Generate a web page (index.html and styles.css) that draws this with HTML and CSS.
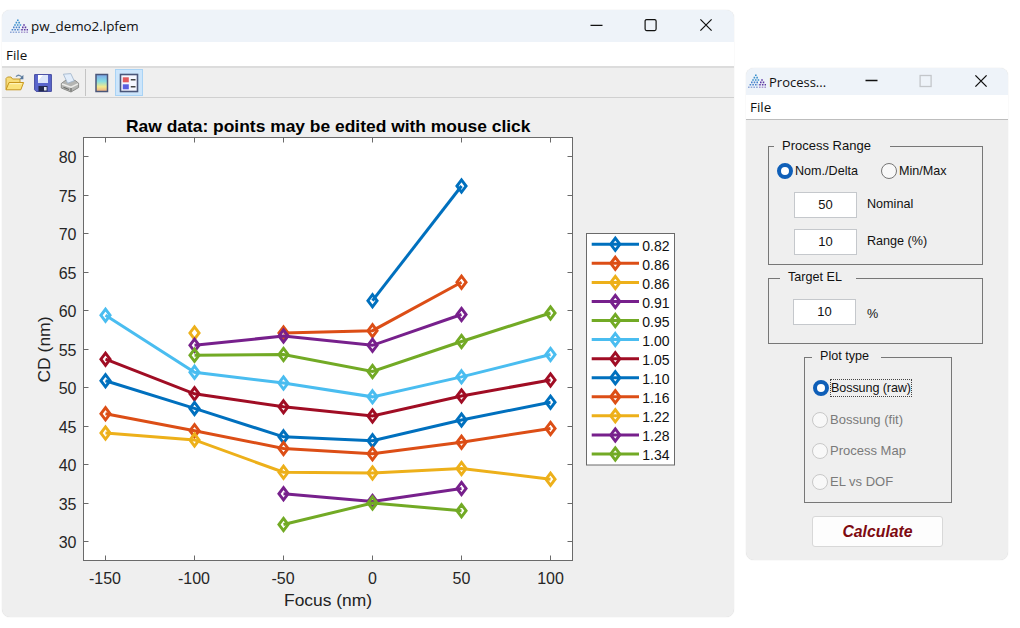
FILE: index.html
```html
<!DOCTYPE html>
<html lang="en">
<head>
    <meta charset="UTF-8">
    <meta name="viewport" content="width=device-width, initial-scale=1.0">
    <title>pw_demo2.lpfem</title>
    <link rel="stylesheet" href="styles.css">
</head>
<body>

<!-- App logo, used in both title bars -->
<svg class="defs" width="0" height="0">
    <symbol id="logo" viewBox="0 0 20 15">
        <g fill="none" stroke-width="1.6" stroke-dasharray="1.6 1.1">
            <path stroke="#3a90cc" d="M8 1.2h1.6M6.6 3.6h4.3M5.2 6h7"/>
            <path stroke="#4a84cc" d="M4 8.4h7.5M2.6 10.8h8.6"/>
            <path stroke="#8fa8d8" d="M1 13.2h10.6"/>
            <path stroke="#5f3aa4" d="M14.2 6h1.6M13 8.4h4.3M12.2 10.8h6.8"/>
            <path stroke="#a89ad0" d="M12 13.2h8"/>
        </g>
    </symbol>
</svg>

<div class="desktop">
    <!-- Plot window -->
    <div class="window plot-window">
        <div class="titlebar">
            <svg class="logo" width="20" height="15"><use href="#logo"/></svg>
            <span class="title">pw_demo2.lpfem</span>
            <svg class="controls" width="124" height="14" viewBox="0 0 124 14" fill="none" stroke="#111" stroke-width="1.2">
                <path d="M0.5 7.3h12"/>
                <rect x="55.1" y="1.6" width="11" height="11" rx="1.5"/>
                <path d="M110.4 1.4l11.2 11.2M121.6 1.4l-11.2 11.2"/>
            </svg>
        </div>
        <div class="menubar"><span>File</span></div>
        <div class="toolbar">
            <!-- open -->
            <svg class="tool" width="20" height="20" viewBox="0 0 20 20">
                <path d="M1 16.5V5.5L2.5 4H6l1.6 2H15v4" fill="#f7dc79" stroke="#c39a2e"/>
                <path d="M1 16.8L4 9.5h14.6l-2.8 7.3z" fill="#fbe27a" stroke="#c8961c"/>
                <path d="M4.8 10.7h12" stroke="#fff6c4"/>
                <path d="M11 3.6c2-2.2 4.4-1.6 6 .8" fill="none" stroke="#6e8aa8" stroke-width="1.3"/>
                <path d="M18.4 1.8v4.4h-4z" fill="#58779a"/>
            </svg>
            <!-- save -->
            <svg class="tool save" width="20" height="20" viewBox="0 0 20 20">
                <path d="M1.6 1.6h16.8v16.8H3.2l-1.6-1.6z" fill="#5a66cc" stroke="#454ba0"/>
                <path d="M5 2h10v8H5z" fill="#dde6fa"/>
                <path d="M5 2h5L5 8z" fill="#fff"/>
                <path d="M5.5 13h9v5.4h-9z" fill="#22294f"/>
                <path d="M11 14h2.6v3.6H11z" fill="#e4e9f4"/>
            </svg>
            <!-- print -->
            <svg class="tool print" width="20" height="20" viewBox="0 0 20 20">
                <path d="M1.3 10.5L6 7l9 .4 3.6 2.8v4.3L11 19l-9.7-4z" fill="#b4b5b3" stroke="#8b8c89"/>
                <path d="M3.4 1.2l7.4-.6 3.4 7.2-6.6 2.4z" fill="#e2edfa" stroke="#9db1c8" stroke-width=".8"/>
                <path d="M2 11l9 3.2 7-3.4" fill="none" stroke="#ecece9" stroke-width="1.5"/>
                <path d="M11 15v3.4M3.5 14.3l5.500 2.200" stroke="#6c6d6a" stroke-width="1.2"/>
            </svg>
            <span class="divider"></span>
            <!-- colorbar -->
            <svg class="tool colorbar" width="14" height="20" viewBox="0 0 14 20">
                <defs>
                    <linearGradient id="bar" x1="0" y1="0" x2="0" y2="1">
                        <stop offset="0" stop-color="#7da6ea"/>
                        <stop offset=".4" stop-color="#86dde2"/>
                        <stop offset=".72" stop-color="#f3ea8c"/>
                        <stop offset="1" stop-color="#eeaa83"/>
                    </linearGradient>
                </defs>
                <rect x="1" y="1.5" width="11.5" height="17" fill="url(#bar)" stroke="#4a5679" stroke-width="1.5"/>
            </svg>
            <!-- legend toggle -->
            <span class="tool-active">
                <svg width="20" height="20" viewBox="0 0 20 20">
                    <rect x="1.5" y="1.5" width="17" height="17" fill="#f5f7ff" stroke="#4a5679" stroke-width="1.6"/>
                    <rect x="3.8" y="4.3" width="6" height="5" fill="#e2595c"/>
                    <rect x="3.8" y="11.3" width="6" height="5" fill="#5a5fe0"/>
                    <path d="M11.8 6.8h4.7M11.8 13.8h4.7" stroke="#444" stroke-width="1.4"/>
                </svg>
            </span>
        </div>
        <svg id="figure" width="732" height="519" viewBox="2 98 732 519"></svg>
    </div>

    <!-- Process window dialog -->
    <div class="window process-window">
        <div class="titlebar">
            <svg class="logo" width="20" height="15"><use href="#logo"/></svg>
            <span class="title">Process...</span>
            <svg class="controls" width="124" height="14" viewBox="0 0 124 14" fill="none" stroke="#111" stroke-width="1.3">
                <path d="M0.5 6.5h12"/>
                <rect x="55.1" y="1.5" width="11" height="11" stroke="#c3c6ca"/>
                <path d="M110.4 1.4l11.2 11.2M121.6 1.4l-11.2 11.2"/>
            </svg>
        </div>
        <div class="menubar"><span>File</span></div>
        <div class="panel">
            <fieldset class="group range">
                <legend>Process Range</legend>
                <div class="modes">
                    <span class="radio checked">Nom./Delta</span>
                    <span class="radio">Min/Max</span>
                </div>
                <div class="field"><span class="box">50</span><span class="name">Nominal</span></div>
                <div class="field"><span class="box">10</span><span class="name">Range (%)</span></div>
            </fieldset>
            <fieldset class="group target">
                <legend>Target EL</legend>
                <div class="field"><span class="box">10</span><span class="percent">%</span></div>
            </fieldset>
            <fieldset class="group plot-type">
                <legend>Plot type</legend>
                <span class="radio checked"><span class="focused">Bossung (raw)</span></span>
                <span class="radio disabled">Bossung (fit)</span>
                <span class="radio disabled">Process Map</span>
                <span class="radio disabled">EL vs DOF</span>
            </fieldset>
            <button class="calculate">Calculate</button>
        </div>
    </div>
</div>

<script src="script.js"></script>
</body>
</html>
```

FILE: styles.css
```css
*,
*::before {
    box-sizing: border-box;
}

body {
    margin: 0;
    background-color: #fff;
    font-family: "Liberation Sans", Arial, sans-serif;
    color: #111;
}

.defs {
    position: absolute;
}

.desktop {
    display: flex;
    align-items: flex-start;
    gap: 12px;
    width: 1020px;
    height: 628px;
    padding: 10px 0 0 2px;
    overflow: hidden;
}

.window {
    background-color: #efefef;
    border-radius: 8px;
    overflow: hidden;
    box-shadow: 0 0 1px #ccc;
}

.plot-window {
    width: 732px;
    height: 607px;
}

.process-window {
    width: 262px;
    height: 492px;
    margin-top: 58px;
}

/* Title bar and menu */
.titlebar {
    display: flex;
    align-items: center;
    height: 32px;
    padding-left: 7px;
    background-color: #eef3f9;
    font-family: "Open Sans", "Noto Sans", sans-serif;
    font-size: 13.4px;
}

.process-window .titlebar {
    height: 27px;
    padding-left: 1px;
    font-size: 13px;
}

.title {
    margin-left: 2px;
    white-space: nowrap;
}

.controls {
    margin-left: auto;
    margin-right: 20px;
    margin-bottom: 2px;
}

.process-window .controls {
    margin-right: 19px;
}

.menubar {
    height: 24px;
    padding-left: 4px;
    background-color: #fff;
    font-family: "Open Sans", "Noto Sans", sans-serif;
    font-size: 13.4px;
    line-height: 26px;
}

.process-window .menubar {
    height: 25px;
    border-bottom: 1px solid #bdbdbd;
    line-height: 25px;
}

/* Toolbar */
.toolbar {
    display: flex;
    align-items: center;
    height: 32px;
    padding-left: 3px;
    border-top: 2px solid #dcdcdc;
    border-bottom: 1px solid #d0d0d0;
}

.save {
    margin-left: 8px;
}

.print {
    margin-left: 7px;
}

.divider {
    width: 1px;
    height: 27px;
    margin-left: 5px;
    background-color: #c4c4c4;
}

.colorbar {
    margin-left: 9px;
}

.tool-active {
    display: flex;
    align-items: center;
    justify-content: center;
    width: 28px;
    height: 27px;
    margin-left: 6px;
    background-color: #cce5fb;
    border: 1px solid #a9d3f5;
}

/* Figure */
#figure {
    display: block;
}

.axes {
    fill: #fff;
    stroke: #6a6a6a;
}

.tick {
    stroke: #6a6a6a;
}

.tick-label {
    font-size: 16px;
    fill: #262626;
}

.axis-label {
    font-size: 17px;
    fill: #222;
}

.plot-title {
    font-size: 17px;
    font-weight: bold;
    fill: #000;
}

.legend-label {
    font-size: 14px;
    fill: #111;
}

.series {
    fill: none;
    stroke-width: 3;
}

.marker {
    fill: none;
    stroke-width: 2.9;
}

/* Process dialog */
.panel {
    display: flex;
    flex-direction: column;
    align-items: flex-start;
    padding: 18px 0 0 22px;
    font-size: 12.6px;
}

.group {
    width: 215px;
    min-width: 0;
    margin: 0;
    padding: 0;
    border: 1px solid #777;
}

.group legend {
    height: 16px;
    line-height: 15px;
    padding: 0 0 0 8px;
}

.range {
    height: 127px;
}

.range legend {
    width: 116px;
    margin-left: 5px;
    font-size: 13px;
}

.target {
    height: 74px;
    margin-top: 5px;
}

.target legend {
    width: 76px;
    margin-left: 11px;
}

.plot-type {
    width: 148px;
    height: 154px;
    margin: 5px 0 0 36px;
}

.plot-type legend {
    width: 69px;
    margin-left: 7px;
}

.radio {
    display: flex;
    align-items: center;
    height: 17px;
}

.radio::before {
    content: "";
    width: 16px;
    height: 16px;
    margin-right: 2px;
    border: 1px solid #767676;
    border-radius: 50%;
    background-color: #f8f8f8;
}

.radio.checked::before {
    border: 4px solid #0f5fb8;
    background-color: #fff;
}

.radio.disabled {
    font-size: 13px;
    color: #7a7a7a;
}

.radio.disabled::before {
    border-color: #c8c8c8;
}

.modes {
    display: flex;
    padding: 8px 0 0 8px;
}

.modes .radio:first-child {
    width: 104px;
}

.field {
    display: flex;
    align-items: center;
    gap: 10px;
    height: 26px;
    margin: 13px 0 0 25px;
}

.field + .field {
    margin-top: 11px;
}

.name {
    margin-bottom: 3px;
}

.box {
    width: 63px;
    height: 26px;
    border: 1px solid #c5c8cc;
    background-color: #fff;
    font-size: 13px;
    line-height: 24px;
    text-align: center;
}

.target .field {
    margin: 13px 0 0 24px;
    gap: 11px;
}

.percent {
    margin-top: 4px;
}

.plot-type .radio {
    margin: 14px 0 0 7px;
}

.plot-type .radio.checked {
    margin: 14px 0 15px 8px;
}

.focused {
    outline: 1px dotted #444;
    line-height: 16px;
    letter-spacing: -0.1px;
}

.calculate {
    width: 131px;
    height: 31px;
    margin: 13px 0 0 44px;
    border: 1px solid #d8d8d8;
    border-radius: 3px;
    background-color: #fdfdfd;
    color: #7d0a10;
    font-family: inherit;
    font-size: 15.8px;
    font-weight: bold;
    font-style: italic;
}
```

FILE: script.js
```js
const BLUE = '#0070be';
const ORANGE = '#dc4e16';
const YELLOW = '#edb01a';
const PURPLE = '#77208c';
const GREEN = '#72aa25';
const CYAN = '#4abdf0';
const RED = '#a00d24';

// One series per dose, points are [focus, CD]
const series = [
    { dose: '0.82', color: BLUE, points: [[0, 61.3], [50, 76.2]] },
    { dose: '0.86', color: ORANGE, points: [[-50, 57.1], [0, 57.4], [50, 63.7]] },
    { dose: '0.86', color: YELLOW, points: [[-100, 57.1]] },
    { dose: '0.91', color: PURPLE, points: [[-100, 55.5], [-50, 56.7], [0, 55.5], [50, 59.5]] },
    { dose: '0.95', color: GREEN, points: [[-100, 54.2], [-50, 54.3], [0, 52.1], [50, 56], [100, 59.7]] },
    { dose: '1.00', color: CYAN, points: [[-150, 59.4], [-100, 52], [-50, 50.6], [0, 48.8], [50, 51.4], [100, 54.3]] },
    { dose: '1.05', color: RED, points: [[-150, 53.7], [-100, 49.2], [-50, 47.5], [0, 46.3], [50, 48.9], [100, 51]] },
    { dose: '1.10', color: BLUE, points: [[-150, 50.9], [-100, 47.3], [-50, 43.6], [0, 43.1], [50, 45.8], [100, 48.1]] },
    { dose: '1.16', color: ORANGE, points: [[-150, 46.6], [-100, 44.4], [-50, 42.1], [0, 41.4], [50, 42.9], [100, 44.7]] },
    { dose: '1.22', color: YELLOW, points: [[-150, 44.1], [-100, 43.2], [-50, 39], [0, 38.9], [50, 39.5], [100, 38.1]] },
    { dose: '1.28', color: PURPLE, points: [[-50, 36.2], [0, 35.2], [50, 36.9]] },
    { dose: '1.34', color: GREEN, points: [[-50, 32.2], [0, 35], [50, 34]] }
];

const box = { left: 83.5, right: 572.5, top: 137.5, bottom: 560.5 };

function xPos(focus) {
    return 105.5 + (focus + 150) * 1.78;
}

function yPos(cd) {
    return 156.8 + (80 - cd) * 7.694;
}

function marker(x, y, color) {
    return `<path class="marker" stroke="${color}" d="M${x} ${y - 6.1}l4.6 6.1l-4.6 6.1l-4.6 -6.1z"/>`;
}

let svg = `<rect class="axes" x="${box.left}" y="${box.top}" width="${box.right - box.left}" height="${box.bottom - box.top}"/>`;

// Ticks
for (let f = -150; f <= 100; f += 50) {
    const x = Math.floor(xPos(f)) + 0.5;
    svg += `<path class="tick" d="M${x} ${box.top}v5M${x} ${box.bottom}v-5"/>`;
    svg += `<text class="tick-label" x="${xPos(f) - (f < 0 ? 0.5 : 0)}" y="583.5" text-anchor="middle">${f}</text>`;
}
for (let cd = 30; cd <= 80; cd += 5) {
    const y = Math.floor(yPos(cd)) + 0.5;
    svg += `<path class="tick" d="M${box.left} ${y}h5M${box.right} ${y}h-5"/>`;
    svg += `<text class="tick-label" x="76.5" y="${y + 6.3}" text-anchor="end">${cd}</text>`;
}

// Labels
svg += '<text class="plot-title" x="126" y="131.5" textLength="404.5" lengthAdjust="spacingAndGlyphs">Raw data: points may be edited with mouse click</text>';
svg += '<text class="axis-label" x="284" y="606" textLength="88" lengthAdjust="spacingAndGlyphs">Focus (nm)</text>';
svg += '<text class="axis-label" transform="translate(50 382.5) rotate(-90)" textLength="66" lengthAdjust="spacingAndGlyphs">CD (nm)</text>';

// Curves
series.forEach(s => {
    const line = s.points.map(p => `${xPos(p[0])},${yPos(p[1])}`).join(' ');
    svg += `<polyline class="series" stroke="${s.color}" points="${line}"/>`;
    s.points.forEach(p => {
        svg += marker(xPos(p[0]), yPos(p[1]), s.color);
    });
});

// Legend
svg += '<rect class="axes" x="586.5" y="233.5" width="88" height="231.5"/>';
series.forEach((s, i) => {
    const y = 244.3 + i * 19.06;
    svg += `<path class="series" stroke="${s.color}" d="M591.7 ${y}h47.3"/>`;
    svg += marker(615.3, y, s.color);
    svg += `<text class="legend-label" x="642.3" y="${y + 6.2}">${s.dose}</text>`;
});

document.getElementById('figure').innerHTML = svg;
```
